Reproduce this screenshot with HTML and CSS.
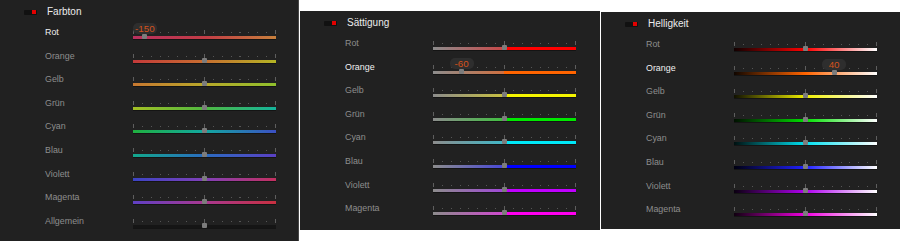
FILE: index.html
```html
<!DOCTYPE html>
<html lang="de">
<head>
<meta charset="utf-8">
<title>HSL</title>
<link rel="stylesheet" href="styles.css">
</head>
<body>
<section class="panel p1">
  <div class="head"><span class="toggle"></span><span class="title">Farbton</span></div>
  <div class="rows">
    <div class="row sel"><span class="lbl">Rot</span><div class="slider"><div class="ticks"></div><div class="track h-rot"></div><i class="thumb" style="left:8.33%"></i><span class="tip" style="left:8.33%">-150</span></div></div>
    <div class="row"><span class="lbl">Orange</span><div class="slider"><div class="ticks"></div><div class="track h-orange"></div><i class="thumb"></i></div></div>
    <div class="row"><span class="lbl">Gelb</span><div class="slider"><div class="ticks"></div><div class="track h-gelb"></div><i class="thumb"></i></div></div>
    <div class="row"><span class="lbl">Grün</span><div class="slider"><div class="ticks"></div><div class="track h-gruen"></div><i class="thumb"></i></div></div>
    <div class="row"><span class="lbl">Cyan</span><div class="slider"><div class="ticks"></div><div class="track h-cyan"></div><i class="thumb"></i></div></div>
    <div class="row"><span class="lbl">Blau</span><div class="slider"><div class="ticks"></div><div class="track h-blau"></div><i class="thumb"></i></div></div>
    <div class="row"><span class="lbl">Violett</span><div class="slider"><div class="ticks"></div><div class="track h-violett"></div><i class="thumb"></i></div></div>
    <div class="row"><span class="lbl">Magenta</span><div class="slider"><div class="ticks"></div><div class="track h-magenta"></div><i class="thumb"></i></div></div>
    <div class="row"><span class="lbl">Allgemein</span><div class="slider"><div class="ticks"></div><div class="track h-all"></div><i class="thumb"></i></div></div>
  </div>
</section>
<section class="panel p2">
  <div class="head"><span class="toggle"></span><span class="title">Sättigung</span></div>
  <div class="rows">
    <div class="row"><span class="lbl">Rot</span><div class="slider"><div class="ticks"></div><div class="track s-rot"></div><i class="thumb"></i></div></div>
    <div class="row sel"><span class="lbl">Orange</span><div class="slider"><div class="ticks"></div><div class="track s-orange"></div><i class="thumb" style="left:20%"></i><span class="tip" style="left:20%">-60</span></div></div>
    <div class="row"><span class="lbl">Gelb</span><div class="slider"><div class="ticks"></div><div class="track s-gelb"></div><i class="thumb"></i></div></div>
    <div class="row"><span class="lbl">Grün</span><div class="slider"><div class="ticks"></div><div class="track s-gruen"></div><i class="thumb"></i></div></div>
    <div class="row"><span class="lbl">Cyan</span><div class="slider"><div class="ticks"></div><div class="track s-cyan"></div><i class="thumb"></i></div></div>
    <div class="row"><span class="lbl">Blau</span><div class="slider"><div class="ticks"></div><div class="track s-blau"></div><i class="thumb"></i></div></div>
    <div class="row"><span class="lbl">Violett</span><div class="slider"><div class="ticks"></div><div class="track s-violett"></div><i class="thumb"></i></div></div>
    <div class="row"><span class="lbl">Magenta</span><div class="slider"><div class="ticks"></div><div class="track s-magenta"></div><i class="thumb"></i></div></div>
  </div>
</section>
<section class="panel p3">
  <div class="head"><span class="toggle"></span><span class="title">Helligkeit</span></div>
  <div class="rows">
    <div class="row"><span class="lbl">Rot</span><div class="slider"><div class="ticks"></div><div class="track l-rot"></div><i class="thumb"></i></div></div>
    <div class="row sel"><span class="lbl">Orange</span><div class="slider"><div class="ticks"></div><div class="track l-orange"></div><i class="thumb" style="left:70%"></i><span class="tip" style="left:70%">40</span></div></div>
    <div class="row"><span class="lbl">Gelb</span><div class="slider"><div class="ticks"></div><div class="track l-gelb"></div><i class="thumb"></i></div></div>
    <div class="row"><span class="lbl">Grün</span><div class="slider"><div class="ticks"></div><div class="track l-gruen"></div><i class="thumb"></i></div></div>
    <div class="row"><span class="lbl">Cyan</span><div class="slider"><div class="ticks"></div><div class="track l-cyan"></div><i class="thumb"></i></div></div>
    <div class="row"><span class="lbl">Blau</span><div class="slider"><div class="ticks"></div><div class="track l-blau"></div><i class="thumb"></i></div></div>
    <div class="row"><span class="lbl">Violett</span><div class="slider"><div class="ticks"></div><div class="track l-violett"></div><i class="thumb"></i></div></div>
    <div class="row"><span class="lbl">Magenta</span><div class="slider"><div class="ticks"></div><div class="track l-magenta"></div><i class="thumb"></i></div></div>
  </div>
</section>
</body>
</html>
```
FILE: styles.css
```css
html, body { margin: 0; padding: 0; }
body {
  background: #ffffff;
  display: flex;
  align-items: flex-start;
  font-family: "Liberation Sans", Arial, sans-serif;
  width: 900px;
  height: 241px;
  overflow: hidden;
}
.panel {
  background: #212121;
  box-sizing: border-box;
  padding: 5px 0 0 24px;
  flex: none;
}
.p1 { width: 299px; height: 241px; border-right: 1px solid #474747; margin-right: 1px; }
.p2 { width: 300px; height: 219px; margin-top: 11px; margin-right: 1px; }
.p3 { width: 299px; height: 217px; margin-top: 12px; }

.head { display: flex; align-items: center; height: 14px; gap: 10px; }
.toggle {
  width: 13px; height: 5px;
  background: #111111;
  border-radius: 1px;
  display: flex; justify-content: flex-end; align-items: center;
  padding-right: 1px; box-sizing: border-box;
}
.toggle::after { content: ""; width: 4px; height: 4px; background: #e30000; }
.title { color: #ececec; font-size: 10px; line-height: 14px; }

.rows { margin-top: 7px; padding-left: 21px; }
.row { display: grid; grid-template-columns: 88px 143px; height: 23.6px; }
.lbl { font-size: 8.9px; line-height: 12px; color: #8e8e8e; white-space: nowrap; }
.row.sel .lbl { color: #f0f0f0; }

.slider { position: relative; }
.ticks {
  margin-top: 4px;
  height: 4px;
  background:
    linear-gradient(#5e5e5e, #5e5e5e) 0 0 / 1px 4px no-repeat,
    linear-gradient(#5e5e5e, #5e5e5e) 50% 0 / 1px 4px no-repeat,
    linear-gradient(#5e5e5e, #5e5e5e) 100% 0 / 1px 4px no-repeat,
    repeating-linear-gradient(90deg, #565656 0 1px, transparent 1px 8.875px) 0 2px / 100% 1px no-repeat;
}
.track { margin-top: 2px; height: 3px; box-shadow: 0 1px 0 #141414; }
.thumb {
  position: absolute; top: 8px; left: 50%;
  width: 5px; height: 5px; margin-left: -2.5px;
  background: #7c7c7c; border-radius: 1px;
}
.tip {
  position: absolute; top: -3px;
  width: 24px; height: 11px; margin-left: -12px;
  line-height: 11px; text-align: center;
  border-radius: 5px;
  background: #2e2e2e;
  color: #d4521c;
  font-size: 9.8px;
}

/* Farbton */
.h-rot { background: linear-gradient(90deg, #b8305e, #c23c46 50%, #c8803c); }
.h-orange { background: linear-gradient(90deg, #c43a3a, #c86e30 50%, #b4b424); }
.h-gelb { background: linear-gradient(90deg, #c87830, #b8a82a 50%, #90c02c); }
.h-gruen { background: linear-gradient(90deg, #a4c024, #50b840 50%, #14b49c); }
.h-cyan { background: linear-gradient(90deg, #20b040, #12a8a0 50%, #3c50c4); }
.h-blau { background: linear-gradient(90deg, #12a88c, #2a6cc0 50%, #5a40c4); }
.h-violett { background: linear-gradient(90deg, #3c44c4, #8040b8 50%, #c43060); }
.h-magenta { background: linear-gradient(90deg, #6040c4, #a83890 50%, #c83040); }
.h-all { background: #151515; }

/* Sättigung */
.s-rot { background: linear-gradient(90deg, #8c8c8c, #c84848 50%, #ff0000 50%); }
.s-orange { background: linear-gradient(90deg, #8c8c8c, #d07040 50%, #ff6400 50%); }
.s-gelb { background: linear-gradient(90deg, #8c8c8c, #c8c040 50%, #f4f400 50%); }
.s-gruen { background: linear-gradient(90deg, #8c8c8c, #40c040 50%, #00e800 50%); }
.s-cyan { background: linear-gradient(90deg, #8c8c8c, #40b8c8 50%, #00e8f8 50%); }
.s-blau { background: linear-gradient(90deg, #8c8c8c, #4848d8 50%, #0000ff 50%); }
.s-violett { background: linear-gradient(90deg, #8c8c8c, #a048d8 50%, #c000ff 50%); }
.s-magenta { background: linear-gradient(90deg, #8c8c8c, #d048d0 50%, #ff00f0 50%); }

/* Helligkeit */
.l-rot { background: linear-gradient(90deg, #100000, #ff0000 50%, #ffffff); }
.l-orange { background: linear-gradient(90deg, #100600, #ff6400 50%, #ffffff); }
.l-gelb { background: linear-gradient(90deg, #101000, #f0f000 50%, #ffffff); }
.l-gruen { background: linear-gradient(90deg, #001000, #00e000 50%, #ffffff); }
.l-cyan { background: linear-gradient(90deg, #001010, #00e0f0 50%, #ffffff); }
.l-blau { background: linear-gradient(90deg, #000010, #2020ff 50%, #ffffff); }
.l-violett { background: linear-gradient(90deg, #0a0010, #b000f0 50%, #ffffff); }
.l-magenta { background: linear-gradient(90deg, #100010, #f000e0 50%, #ffffff); }
```
